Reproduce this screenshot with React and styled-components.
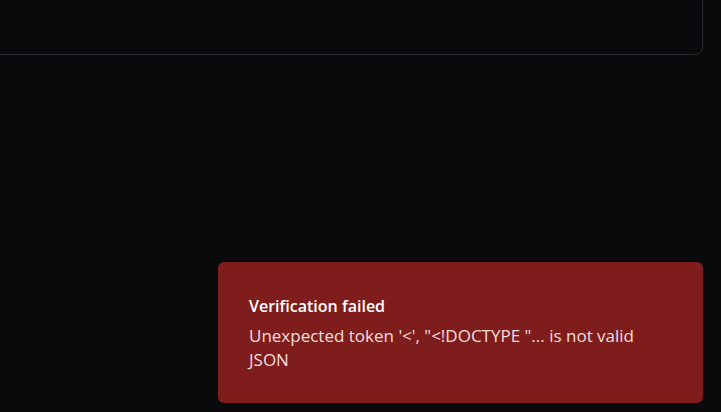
import React from "react";
import styled, { createGlobalStyle } from "styled-components";

const GlobalStyle = createGlobalStyle`
  html, body {
    margin: 0;
    padding: 0;
    background: #0a0a0c;
    height: 100%;
    overflow: hidden;
  }
  body {
    font-family: "Open Sans", "Noto Sans", sans-serif;
    color: #fafafa;
  }
`;

const Page = styled.main`
  padding: 0 18px 0 0;
`;

// panel scrolled partly out of view, only its bottom-right edge shows
const Panel = styled.section`
  margin: -60px 0 0 -20px;
  height: 115px;
  border: 1px solid #2a2a2e;
  border-radius: 8px;
  background: #0a0a0c;
  box-sizing: border-box;
`;

const Toaster = styled.div`
  position: fixed;
  right: 18px;
  bottom: 9px;
  width: 485px;
`;

const Toast = styled.div`
  box-sizing: border-box;
  min-height: 141px;
  padding: 33px 36px 24px 31px;
  border-radius: 6px;
  background: #7f1d1d;
  display: flex;
  flex-direction: column;
  gap: 7px;
`;

const Title = styled.div`
  font-size: 16px;
  font-weight: 600;
  line-height: 22px;
  color: #ffffff;
`;

const Message = styled.div`
  font-size: 17px;
  line-height: 24px;
  color: #f3dede;
`;

export default function App() {
  return (
    <>
      <GlobalStyle />
      <Page>
        <Panel />
      </Page>
      <Toaster>
        <Toast>
          <Title>Verification failed</Title>
          <Message>Unexpected token '&lt;', "&lt;!DOCTYPE "... is not valid JSON</Message>
        </Toast>
      </Toaster>
    </>
  );
}
